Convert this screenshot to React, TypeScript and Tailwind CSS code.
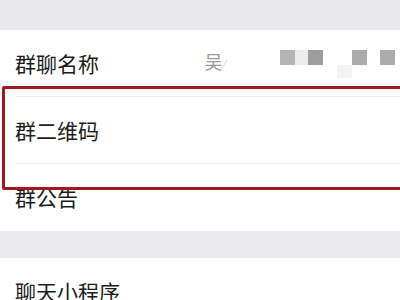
import React from 'react';

const font = { fontFamily: '"Noto Sans CJK SC", "Noto Sans", sans-serif' };

function Row({ label, divider = true, children }: { label: string; divider?: boolean; children?: React.ReactNode }) {
  return (
    <div className="bg-white pl-[15px]">
      <div className={`h-[67px] flex items-center ${divider ? 'border-b border-[#ececec]' : ''}`}>
        <span className="text-[21px] leading-none text-[#1c1c1c]">{label}</span>
        {children}
      </div>
    </div>
  );
}

// blurred-out group name on the right
function MaskedName() {
  return (
    <div className="ml-auto mr-[5px] flex items-start h-[30px] pt-[2px]">
      <span className="text-[18px] leading-none text-[#9a9a9a] mt-[2px]">吴</span>
      <span className="text-[12px] leading-none text-[#d8d8d8] mt-[8px] ml-[1px]">⁄</span>
      <div className="flex ml-[55px]">
        <span className="w-[15px] h-[15px] bg-[#b4b4b4]" />
        <span className="w-[13px] h-[15px] bg-[#ececec]" />
        <span className="w-[15px] h-[15px] bg-[#9c9c9c]" />
      </div>
      <span className="ml-[14px] mt-[15px] w-[15px] h-[13px] bg-[#f3f3f3]" />
      <span className="w-[15px] h-[15px] bg-[#ababab]" />
      <span className="ml-[13px] w-[15px] h-[15px] bg-[#acacac]" />
    </div>
  );
}

export default function App() {
  return (
    <div className="relative w-[400px] h-[300px] overflow-hidden bg-[#ebebed]" style={font}>
      <div className="h-[30px] bg-[#e9e9eb]" />
      <Row label="群聊名称">
        <MaskedName />
      </Row>
      <Row label="群二维码" />
      <Row label="群公告" divider={false} />
      <div className="h-[27px] bg-[#ebebed]" />
      <Row label="聊天小程序" divider={false} />
      {/* red highlight drawn over the list */}
      <div className="absolute left-[2px] top-[86px] w-[410px] h-[104px] border-[3px] border-[#a0191c] rounded-[2px]" />
    </div>
  );
}
